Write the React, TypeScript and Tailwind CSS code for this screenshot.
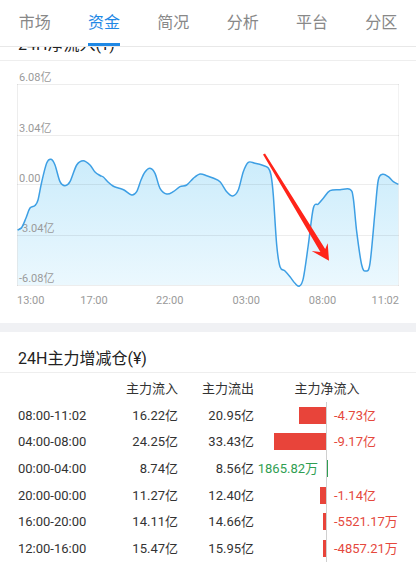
import React from "react";

const tabs = ["市场", "资金", "简况", "分析", "平台", "分区"];

const pts: [number, number][] = [
  [17.5, 230], [21.7, 227.5], [26, 218], [30, 208], [35, 205.5], [38, 200],
  [41.7, 182], [46.7, 163], [51, 159.3], [55, 165], [60, 181.7], [65, 185.7],
  [70, 181.7], [76.7, 165], [83.3, 160.7], [90, 165], [95, 172], [100, 175.5],
  [103.3, 177], [108, 182], [113, 186], [118.3, 188], [124, 190], [131.7, 195],
  [136.7, 191.7], [141, 180], [145, 172], [150, 168.3], [155, 173.3], [160, 188.3],
  [166.7, 194], [173.3, 191.7], [180, 186.7], [186.7, 185], [193.3, 178.3],
  [200, 174], [206.7, 175.7], [213, 178], [220, 181.7], [226.7, 191.7],
  [232.7, 196], [238.3, 190], [243.3, 171.7], [248.3, 162.3], [255, 163.3],
  [263.3, 165.5], [268.3, 168], [271, 175], [273.3, 195], [276.7, 245],
  [280, 266.7], [285, 271], [290, 276.7], [295, 283.3], [299.3, 286],
  [303.3, 278.3], [308.3, 245], [313.3, 208.3], [318.3, 204], [323.3, 198.3],
  [330, 190.7], [340, 189.7], [350, 189.3], [353.3, 198.3], [356.7, 231.7],
  [361.7, 265], [365.7, 271], [370, 263.3], [375, 211.7], [378.3, 180],
  [382.7, 174.3], [388.3, 176.7], [393.3, 181.7], [398.3, 184.3],
];

function smooth(p: [number, number][]) {
  let d = `M${p[0][0]},${p[0][1]}`;
  for (let i = 0; i < p.length - 1; i++) {
    const p0 = p[i - 1] || p[i];
    const p1 = p[i];
    const p2 = p[i + 1];
    const p3 = p[i + 2] || p[i + 1];
    const c1x = p1[0] + (p2[0] - p0[0]) / 6;
    const c1y = p1[1] + (p2[1] - p0[1]) / 6;
    const c2x = p2[0] - (p3[0] - p1[0]) / 6;
    const c2y = p2[1] - (p3[1] - p1[1]) / 6;
    d += ` C${c1x.toFixed(2)},${c1y.toFixed(2)} ${c2x.toFixed(2)},${c2y.toFixed(2)} ${p2[0]},${p2[1]}`;
  }
  return d;
}

const linePath = smooth(pts);
const areaPath = `${linePath} L398.3,285 L17.5,285 Z`;

const grid = [84.5, 135.5, 184.5, 235.5, 285.5];
const yLabels = ["6.08亿", "3.04亿", "0.00", "-3.04亿", "-6.08亿"];
const gridForLabels = [84, 135, 184.5, 235, 285];

const rows: [string, string, string, number, string][] = [
  ["08:00-11:02", "16.22亿", "20.95亿", -4.73, "-4.73亿"],
  ["04:00-08:00", "24.25亿", "33.43亿", -9.17, "-9.17亿"],
  ["00:00-04:00", "8.74亿", "8.56亿", 0.1866, "1865.82万"],
  ["20:00-00:00", "11.27亿", "12.40亿", -1.14, "-1.14亿"],
  ["16:00-20:00", "14.11亿", "14.66亿", -0.5521, "-5521.17万"],
  ["12:00-16:00", "15.47亿", "15.95亿", -0.4857, "-4857.21万"],
];

function barW(v: number) {
  return Math.max(1, Math.round(Math.abs(v) * 5.7));
}

function Chart() {
  return (
    <svg width="416" height="262" viewBox="0 61 416 262" className="block">
      <defs>
        <linearGradient id="fillg" x1="0" y1="150" x2="0" y2="285" gradientUnits="userSpaceOnUse">
          <stop offset="0" stopColor="#c9ebfb" />
          <stop offset="1" stopColor="#ebf8fe" />
        </linearGradient>
      </defs>
      <path d={areaPath} fill="url(#fillg)" />
      {grid.map((y) => (
        <line key={y} x1="17" x2="399" y1={y} y2={y} stroke="rgba(0,0,0,0.07)" strokeWidth="1" />
      ))}
      <line x1="17.5" x2="17.5" y1="84" y2="286" stroke="rgba(0,0,0,0.07)" />
      <line x1="398.5" x2="398.5" y1="84" y2="286" stroke="rgba(0,0,0,0.05)" />
      {yLabels.map((t, i) => (
        <text key={t} x="19" y={gridForLabels[i] - 3} fontSize="11" fill="#9a9a9a" fontFamily="Roboto, 'Noto Sans CJK SC', sans-serif">
          {t}
        </text>
      ))}
      <path d={linePath} fill="none" stroke="#3d9fe4" strokeWidth="1.5" strokeLinejoin="round" />
      <g fontSize="11" fill="#9a9a9a" fontFamily="Roboto, 'Noto Sans CJK SC', sans-serif">
        <text x="17" y="304">13:00</text>
        <text x="94" y="304" textAnchor="middle">17:00</text>
        <text x="169.7" y="304" textAnchor="middle">22:00</text>
        <text x="246.3" y="304" textAnchor="middle">03:00</text>
        <text x="322.5" y="304" textAnchor="middle">08:00</text>
        <text x="399" y="304" textAnchor="end">11:02</text>
      </g>
      <polygon
        points="329,260.7 327.7,243.3 325.2,249 265,153.4 263,154.6 320.4,251.9 311.7,251"
        fill="#ff2419"
      />
    </svg>
  );
}

export default function App() {
  return (
    <div className="w-[416px] h-[577px] overflow-hidden bg-white flex flex-col font-[Roboto,'Noto_Sans_CJK_SC',sans-serif]">
      <div className="grid grid-cols-6 h-[47px] border-b border-[#e8e8e8] bg-white shrink-0">
        {tabs.map((t) => (
          <div key={t} className="flex items-center justify-center">
            <span className={`relative inline-block text-[16px] leading-[46px] ${t === "资金" ? "text-[#1e88e5]" : "text-[#888888]"}`}>
              {t}
              {t === "资金" && <span className="absolute left-0 right-0 bottom-0 h-[3px] bg-[#1e88e5]" />}
            </span>
          </div>
        ))}
      </div>
      <div className="flex-1 overflow-hidden">
        <div className="-mt-[27px]">
          <div className="h-[41px] border-b border-[#eeeeee] flex items-end pl-[18px] pb-[4px]">
            <span className="text-[16px] leading-[22px] text-[#222222]">24H净流入(¥)</span>
          </div>
          <Chart />
          <div className="h-[9px] bg-[#f0f1f4]" />
          <div className="h-[41px] border-b border-[#eeeeee] flex items-end pl-[18px] pb-[2px]">
            <span className="text-[16px] leading-[22px] text-[#222222]">24H主力增减仓(¥)</span>
          </div>
          <div className="flex items-center h-[29px] text-[13px] text-[#333333] pt-[2px]">
            <div className="w-[110px]" />
            <div className="w-[68px] text-right">主力流入</div>
            <div className="w-[76px] text-right">主力流出</div>
            <div className="w-[146px] text-center">主力净流入</div>
          </div>
          {rows.map(([time, inflow, outflow, net, label]) => (
            <div key={time} className="flex items-center h-[26.67px] text-[13px] text-[#333333]">
              <div className="w-[110px] pl-[18px]">{time}</div>
              <div className="w-[68px] text-right">{inflow}</div>
              <div className="w-[76px] text-right">{outflow}</div>
              <div className="w-[72px] h-full flex items-center justify-end">
                {net > 0 ? (
                  <span className="mr-[8px] text-[#2f9e52]">{label}</span>
                ) : (
                  <span className="h-[17px] bg-[#e8443a]" style={{ width: barW(net) }} />
                )}
              </div>
              <div className="w-px h-full bg-[#d0d0d0]" />
              <div className="flex-1 h-full flex items-center">
                {net > 0 ? (
                  <span className="h-[17px] bg-[#2f9e52]" style={{ width: barW(net) }} />
                ) : (
                  <span className="ml-[7px] text-[#e5483d]">{label}</span>
                )}
              </div>
            </div>
          ))}
        </div>
      </div>
    </div>
  );
}
